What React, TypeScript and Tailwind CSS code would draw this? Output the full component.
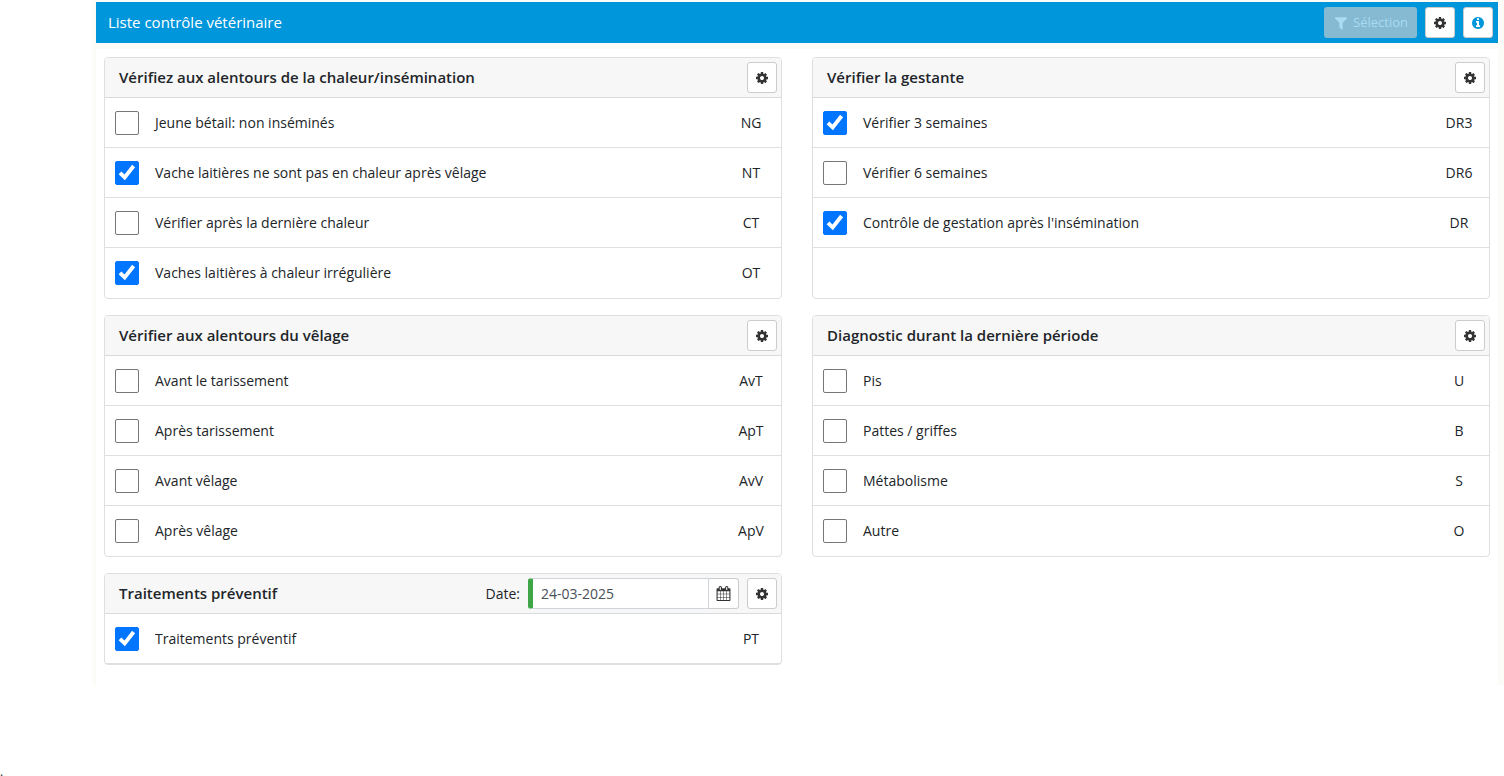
import { useId, useState, type ReactNode } from "react";

type Item = { label: string; code: string; checked?: boolean };

const PATHS = {
  cog: "M1024 896q0-106-75-181t-181-75-181 75-75 181 75 181 181 75 181-75 75-181zm512-109v222q0 12-8 23t-20 13l-185 28q-19 54-39 91 35 50 107 138 10 12 10 25t-9 23q-27 37-99 108t-94 71q-12 0-26-9l-138-108q-44 23-91 38-16 136-29 186-7 28-36 28h-222q-14 0-24.5-8.5t-11.5-21.5l-28-184q-49-16-90-37l-141 107q-10 9-25 9-14 0-25-11-126-114-165-168-7-10-7-23 0-12 8-23 15-21 51-66.5t54-70.5q-27-50-41-99l-183-27q-13-2-21-12.5t-8-23.5v-222q0-12 8-23t19-13l186-28q14-46 39-92-40-57-107-138-10-12-10-24 0-10 9-23 26-36 98.5-107.5t94.5-71.5q13 0 26 10l138 107q44-23 91-38 16-136 29-186 7-28 36-28h222q14 0 24.5 8.5t11.5 21.5l28 184q49 16 90 37l142-107q9-9 24-9 13 0 25 10 129 119 165 170 7 8 7 22 0 12-8 23-15 21-51 66.5t-54 70.5q26 50 41 98l183 28q13 2 21 12.5t8 23.5z",
  info: "M1152 1376v-160q0-14-9-23t-23-9h-96v-512q0-14-9-23t-23-9h-320q-14 0-23 9t-9 23v160q0 14 9 23t23 9h96v320h-96q-14 0-23 9t-9 23v160q0 14 9 23t23 9h448q14 0 23-9t9-23zm-128-896v-160q0-14-9-23t-23-9h-192q-14 0-23 9t-9 23v160q0 14 9 23t23 9h192q14 0 23-9t9-23zm640 416q0 209-103 385.5t-279.5 279.5-385.5 103-385.5-103-279.5-279.5-103-385.5 103-385.5 279.5-279.5 385.5-103 385.5 103 279.5 279.5 103 385.5z",
  calendar:
    "M192 1664h288v-288h-288v288zm352 0h320v-288h-320v288zm-352-352h288v-320h-288v320zm352 0h320v-320h-320v320zm-352-384h288v-288h-288v288zm736 736h320v-288h-320v288zm-384-736h320v-288h-320v288zm768 736h288v-288h-288v288zm-384-352h320v-320h-320v320zm-352-864v-288q0-13-9.5-22.5t-22.5-9.5h-64q-13 0-22.5 9.5t-9.5 22.5v288q0 13 9.5 22.5t22.5 9.5h64q13 0 22.5-9.5t9.5-22.5zm736 864h288v-320h-288v320zm-384-384h320v-288h-320v288zm384 0h288v-288h-288v288zm32-480v-288q0-13-9.5-22.5t-22.5-9.5h-64q-13 0-22.5 9.5t-9.5 22.5v288q0 13 9.5 22.5t22.5 9.5h64q13 0 22.5-9.5t9.5-22.5zm384-64v1280q0 52-38 90t-90 38h-1408q-52 0-90-38t-38-90v-1280q0-52 38-90t90-38h128v-96q0-66 47-113t113-47h64q66 0 113 47t47 113v96h384v-96q0-66 47-113t113-47h64q66 0 113 47t47 113v96h128q52 0 90 38t38 90z",
  filter:
    "M1595 295q17 41-14 70l-493 493v742q0 42-39 59-13 5-25 5-27 0-45-19l-256-256q-19-19-19-45v-486l-493-493q-31-29-14-70 17-39 59-39h1280q42 0 59 39z",
};

function Icon({ d, viewBox = "0 0 1792 1792", className }: { d: string; viewBox?: string; className: string }) {
  return (
    <svg viewBox={viewBox} fill="currentColor" aria-hidden="true" className={className}>
      <path d={d} />
    </svg>
  );
}

function SettingsButton({ label }: { label: string }) {
  return (
    <button
      type="button"
      aria-label={label}
      className="flex h-[31px] w-[30px] shrink-0 items-center justify-center rounded-[3px] border border-[#ccc] bg-white text-[#333]"
    >
      <Icon d={PATHS.cog} viewBox="0 128 1536 1536" className="size-3" />
    </button>
  );
}

function Row({ item, divider }: { item: Item; divider: boolean }) {
  const id = useId();
  const [checked, setChecked] = useState(Boolean(item.checked));
  return (
    <li className={`flex h-[50px] items-center pl-2.5 ${divider ? "border-b border-[#dedfe0]" : ""}`}>
      <span className="grid size-6 shrink-0">
        <input
          id={id}
          type="checkbox"
          checked={checked}
          onChange={(e) => setChecked(e.target.checked)}
          className="peer col-start-1 row-start-1 size-6 appearance-none rounded-[2px] border border-[#767676] bg-white checked:border-[#0075ff] checked:bg-[#0075ff]"
        />
        <svg
          viewBox="0 0 24 24"
          aria-hidden="true"
          className="pointer-events-none invisible col-start-1 row-start-1 size-6 fill-none stroke-white peer-checked:visible"
        >
          <path d="M5 11.8L9.7 16.4L18.6 5" strokeWidth="3.9" />
        </svg>
      </span>
      <label htmlFor={id} className="flex-1 pl-4">
        {item.label}
      </label>
      <span className="w-[60px] text-center">{item.code}</span>
    </li>
  );
}

function Card({
  title,
  items,
  extra,
  lastDivider = false,
}: {
  title: string;
  items: Item[];
  extra?: ReactNode;
  lastDivider?: boolean;
}) {
  return (
    <section className="flex flex-col rounded-[4px] border border-[#dedfe0] bg-white">
      <header className="flex h-10 items-center gap-2 rounded-t-[3px] border-b border-[#d9dadb] bg-[#f7f7f7] pl-3.5 pr-1">
        <h2 className="flex-1 text-[15px] font-semibold">{title}</h2>
        {extra}
        <SettingsButton label={`Paramètres : ${title}`} />
      </header>
      <ul>
        {items.map((item, i) => (
          <Row key={item.code} item={item} divider={lastDivider || i < 3} />
        ))}
      </ul>
    </section>
  );
}

function DateField() {
  return (
    <div className="flex items-center gap-2">
      <label htmlFor="treatment-date">Date:</label>
      <div className="flex h-[31px]">
        <input
          id="treatment-date"
          type="text"
          defaultValue="24-03-2025"
          className="w-[181px] rounded-l-[3px] border border-l-[5px] border-[#ced4da] border-l-[#3fa648] bg-white pl-2 text-sm text-[#495057]"
        />
        <button
          type="button"
          aria-label="Ouvrir le calendrier"
          className="flex w-[30px] items-center justify-center rounded-r-[3px] border border-l-0 border-[#ccc] bg-white text-[#333]"
        >
          <Icon d={PATHS.calendar} className="size-[15px]" />
        </button>
      </div>
    </div>
  );
}

const HEAT: Item[] = [
  { label: "Jeune bétail: non inséminés", code: "NG" },
  { label: "Vache laitières ne sont pas en chaleur après vêlage", code: "NT", checked: true },
  { label: "Vérifier après la dernière chaleur", code: "CT" },
  { label: "Vaches laitières à chaleur irrégulière", code: "OT", checked: true },
];

const PREGNANCY: Item[] = [
  { label: "Vérifier 3 semaines", code: "DR3", checked: true },
  { label: "Vérifier 6 semaines", code: "DR6" },
  { label: "Contrôle de gestation après l'insémination", code: "DR", checked: true },
];

const CALVING: Item[] = [
  { label: "Avant le tarissement", code: "AvT" },
  { label: "Après tarissement", code: "ApT" },
  { label: "Avant vêlage", code: "AvV" },
  { label: "Après vêlage", code: "ApV" },
];

const DIAGNOSIS: Item[] = [
  { label: "Pis", code: "U" },
  { label: "Pattes / griffes", code: "B" },
  { label: "Métabolisme", code: "S" },
  { label: "Autre", code: "O" },
];

const TREATMENTS: Item[] = [{ label: "Traitements préventif", code: "PT", checked: true }];

export default function App() {
  return (
    <div className="flex min-h-screen flex-col justify-between bg-white font-['Open_Sans','Noto_Sans',sans-serif] text-sm text-[#212529]">
      <div className="ml-[93px] bg-[#fbfbf8] pl-[3px] pr-1.5 pt-0.5">
        <header className="flex h-[41px] items-center gap-2 bg-[#0096db] pl-3 pr-[5px] text-white">
          <h1 className="flex-1 text-[15px]">Liste contrôle vétérinaire</h1>
          <button
            type="button"
            disabled
            className="flex h-[31px] w-[93px] items-center justify-center gap-1 rounded-[3px] bg-[#86b9d2] text-[13px] font-medium text-[#a9dbf2]"
          >
            <Icon d={PATHS.filter} className="size-4" />
            Sélection
          </button>
          <SettingsButton label="Paramètres" />
          <button
            type="button"
            aria-label="Informations"
            className="flex h-[31px] w-[30px] items-center justify-center rounded-[3px] border border-[#ccc] bg-white text-[#0096db]"
          >
            <Icon d={PATHS.info} className="size-3.5" />
          </button>
        </header>
        <main className="mt-1.5 grid grid-cols-2 gap-x-[30px] gap-y-4 bg-white px-2 pb-5 pt-2">
          <Card title="Vérifiez aux alentours de la chaleur/insémination" items={HEAT} />
          <Card title="Vérifier la gestante" items={PREGNANCY} />
          <Card title="Vérifier aux alentours du vêlage" items={CALVING} />
          <Card title="Diagnostic durant la dernière période" items={DIAGNOSIS} />
          <Card title="Traitements préventif" items={TREATMENTS} extra={<DateField />} lastDivider />
        </main>
      </div>
      <p className="h-3 overflow-hidden text-xs leading-4">.</p>
    </div>
  );
}
